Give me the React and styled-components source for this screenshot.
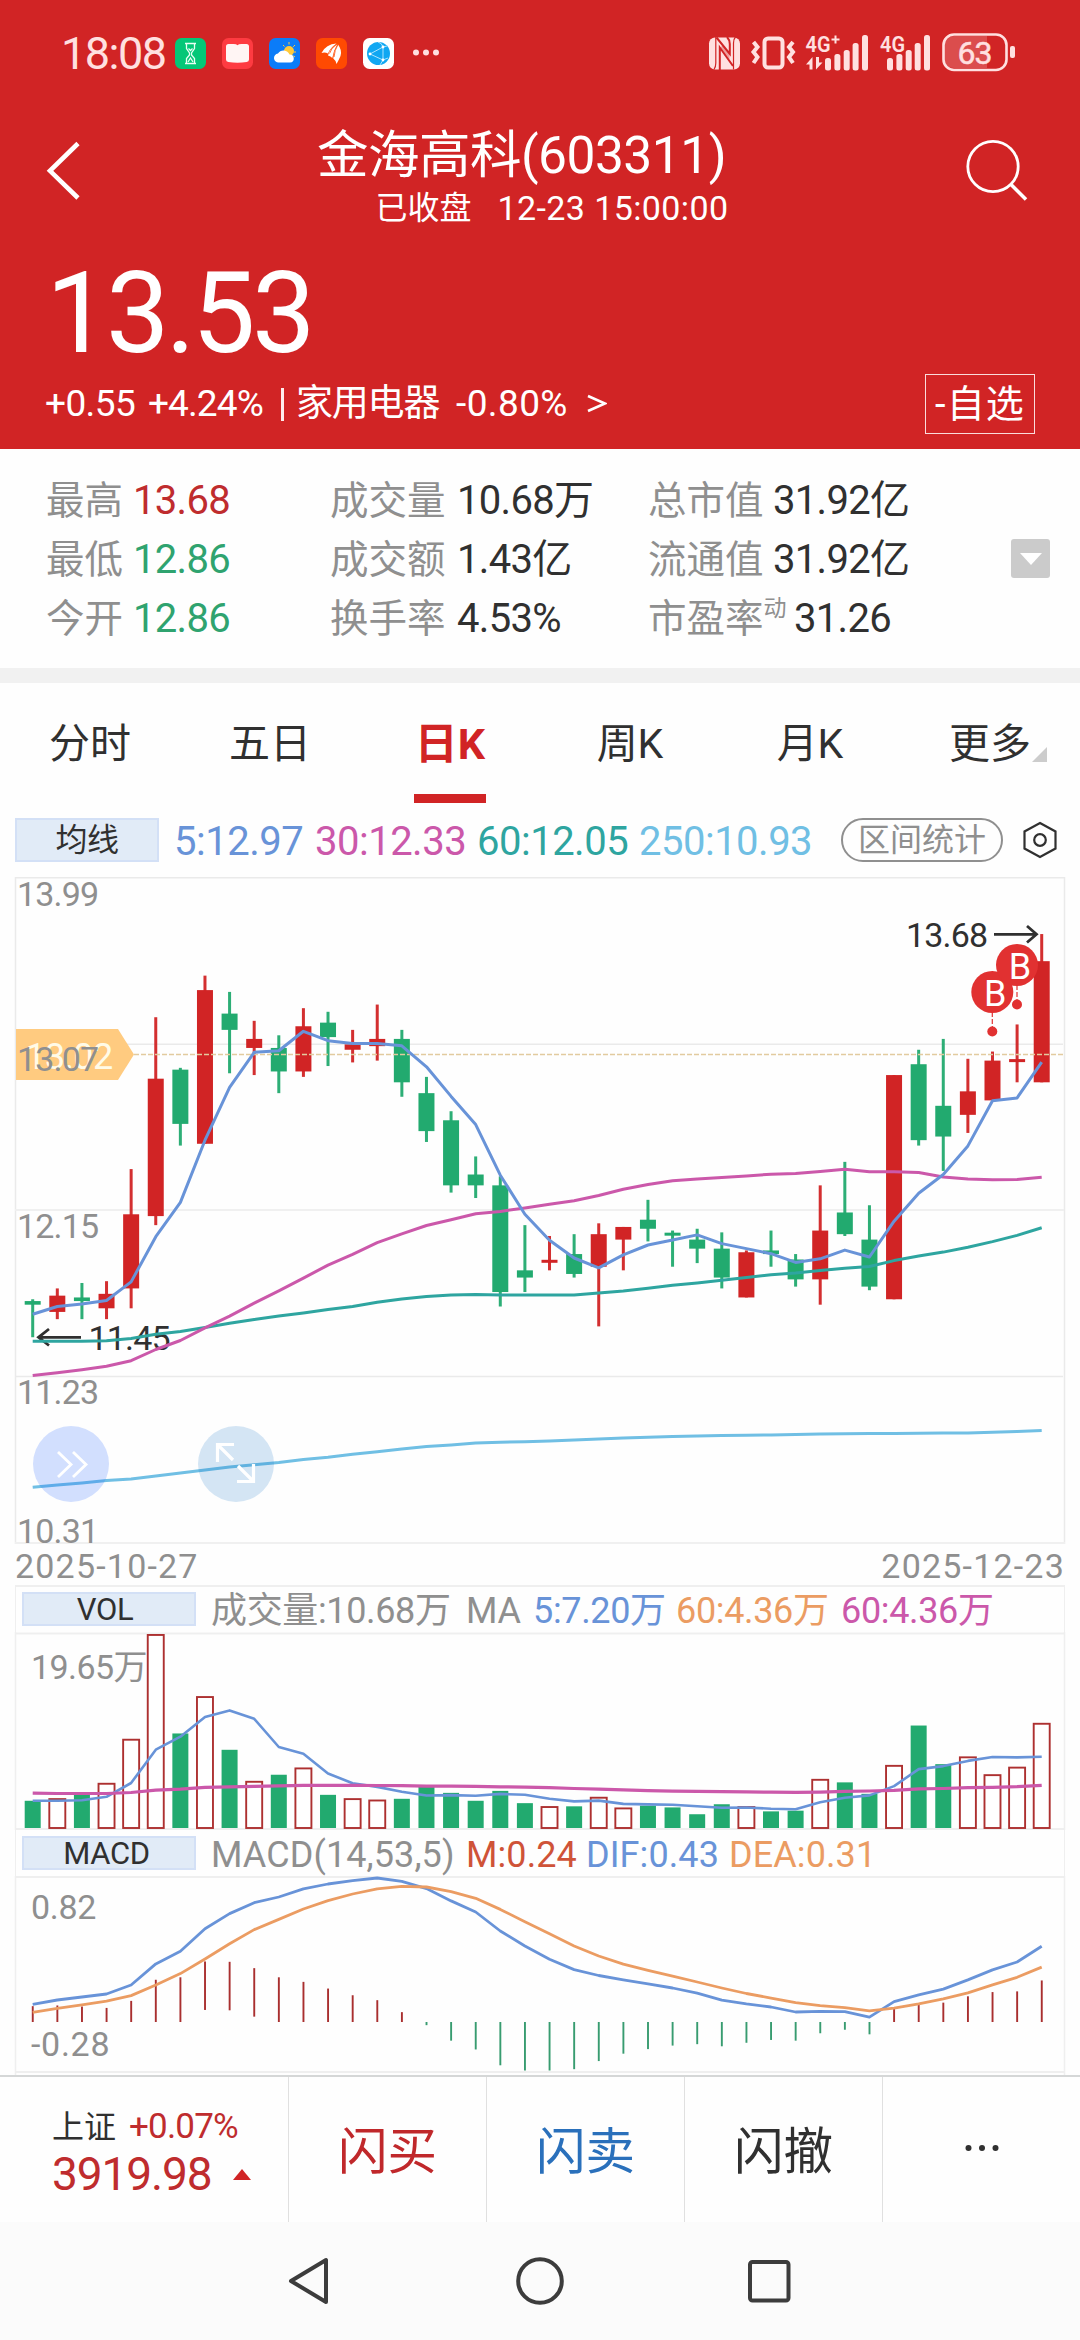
import React from "react";
import styled, { createGlobalStyle } from "styled-components";

const RED = "#d12425";
const GREEN = "#22aa6f";
const BLUE = "#6893d8";
const PURPLE = "#cb58aa";
const TEAL = "#2ea5a0";
const SKY = "#70bfe4";
const ORANGE = "#eb9c62";
const GREY = "#8f8f8f";
const INK = "#303030";

const FONT = 'Roboto, "Noto Sans CJK SC", sans-serif';

const GlobalStyle = createGlobalStyle`
  * {
    box-sizing: border-box;
  }
  body {
    margin: 0;
    background: #fefefe;
    font-family: ${FONT};
    color: ${INK};
  }
  svg {
    display: block;
    flex: none;
  }
`;

/* ---------- data ---------- */

// [direction, body top, body bottom, high, low, volume]
const DAYS = [
  ["g", 11.65, 11.63, 11.66, 11.45, 2.8],
  ["r", 11.68, 11.59, 11.72, 11.55, 3.07],
  ["g", 11.67, 11.65, 11.75, 11.55, 3.4],
  ["r", 11.69, 11.61, 11.76, 11.55, 4.62],
  ["r", 12.13, 11.72, 12.38, 11.61, 9.07],
  ["r", 12.88, 12.12, 13.22, 12.07, 19.65],
  ["g", 12.93, 12.63, 12.94, 12.51, 9.6],
  ["r", 13.37, 12.52, 13.45, 12.52, 13.38],
  ["g", 13.24, 13.15, 13.36, 12.91, 7.95],
  ["r", 13.1, 13.05, 13.2, 12.9, 4.82],
  ["g", 13.05, 12.92, 13.12, 12.8, 5.43],
  ["r", 13.17, 12.92, 13.27, 12.89, 6.17],
  ["g", 13.19, 13.11, 13.25, 12.95, 3.4],
  ["r", 13.07, 13.04, 13.15, 12.97, 3.07],
  ["r", 13.1, 13.06, 13.29, 12.98, 2.93],
  ["g", 13.1, 12.86, 13.15, 12.78, 3.0],
  ["g", 12.8, 12.59, 12.89, 12.53, 4.25],
  ["g", 12.65, 12.29, 12.7, 12.25, 3.6],
  ["g", 12.35, 12.29, 12.45, 12.22, 2.8],
  ["g", 12.29, 11.7, 12.34, 11.62, 3.8],
  ["g", 11.82, 11.78, 12.07, 11.7, 2.56],
  ["r", 11.87, 11.87, 12.01, 11.82, 2.27],
  ["g", 11.91, 11.8, 12.02, 11.78, 2.24],
  ["r", 12.02, 11.84, 12.08, 11.51, 3.21],
  ["r", 12.06, 11.99, 12.06, 11.82, 2.13],
  ["g", 12.1, 12.05, 12.21, 11.98, 2.31],
  ["g", 12.02, 12.01, 12.04, 11.84, 2.13],
  ["g", 11.99, 11.94, 12.05, 11.86, 1.44],
  ["g", 11.94, 11.78, 12.03, 11.72, 2.45],
  ["r", 11.92, 11.67, 11.93, 11.67, 2.27],
  ["g", 11.93, 11.91, 12.04, 11.84, 1.73],
  ["g", 11.88, 11.77, 11.91, 11.73, 1.8],
  ["r", 12.04, 11.77, 12.29, 11.63, 5.02],
  ["g", 12.14, 12.02, 12.42, 12.01, 4.66],
  ["g", 11.99, 11.73, 12.18, 11.71, 3.5],
  ["r", 12.9, 11.66, 12.9, 11.66, 6.43],
  ["g", 12.96, 12.54, 13.04, 12.51, 10.4],
  ["g", 12.73, 12.56, 13.1, 12.37, 6.5],
  ["r", 12.81, 12.68, 12.99, 12.58, 7.29],
  ["r", 12.98, 12.76, 13.03, 12.76, 5.49],
  ["r", 12.98, 12.98, 13.18, 12.86, 6.25],
  ["r", 13.53, 12.86, 13.68, 12.86, 10.68],
];

const MA30 = [
  11.238, 11.253, 11.27, 11.289, 11.32, 11.382, 11.432, 11.502, 11.567, 11.638,
  11.706, 11.777, 11.849, 11.908, 11.973, 12.022, 12.068, 12.1, 12.133, 12.146,
  12.165, 12.186, 12.205, 12.234, 12.268, 12.295, 12.316, 12.325, 12.333,
  12.342, 12.352, 12.356, 12.367, 12.379, 12.365, 12.365, 12.361, 12.337,
  12.325, 12.321, 12.323, 12.335,
];

const MA60 = [
  11.428, 11.428, 11.428, 11.43, 11.443, 11.466, 11.481, 11.504, 11.527, 11.548,
  11.567, 11.584, 11.603, 11.62, 11.643, 11.662, 11.676, 11.683, 11.687, 11.683,
  11.683, 11.683, 11.683, 11.695, 11.706, 11.721, 11.737, 11.75, 11.765, 11.78,
  11.796, 11.805, 11.819, 11.832, 11.841, 11.874, 11.899, 11.921, 11.948,
  11.979, 12.013, 12.055,
];

const MA250 = [
  10.62, 10.633, 10.644, 10.657, 10.666, 10.683, 10.699, 10.716, 10.732, 10.745,
  10.757, 10.773, 10.786, 10.803, 10.817, 10.832, 10.845, 10.854, 10.865,
  10.869, 10.872, 10.876, 10.882, 10.887, 10.892, 10.897, 10.901, 10.904,
  10.906, 10.908, 10.91, 10.912, 10.914, 10.916, 10.917, 10.918, 10.919, 10.92,
  10.921, 10.924, 10.928, 10.934,
];

const VOL60 = [
  3.57, 3.54, 3.54, 3.54, 3.64, 3.88, 3.98, 4.15, 4.21, 4.25, 4.31, 4.35, 4.35,
  4.35, 4.34, 4.32, 4.28, 4.28, 4.25, 4.21, 4.18, 4.12, 4.04, 3.97, 3.9, 3.83,
  3.78, 3.75, 3.73, 3.7, 3.67, 3.65, 3.68, 3.75, 3.79, 3.86, 4.0, 4.04, 4.12,
  4.15, 4.22, 4.36,
];

const DIF = [
  0.1, 0.125, 0.142, 0.159, 0.21, 0.33, 0.402, 0.53, 0.616, 0.678, 0.71, 0.756,
  0.784, 0.803, 0.818, 0.799, 0.758, 0.688, 0.625, 0.517, 0.432, 0.357, 0.298,
  0.264, 0.239, 0.217, 0.193, 0.164, 0.124, 0.103, 0.085, 0.057, 0.061, 0.059,
  0.028, 0.116, 0.154, 0.187, 0.239, 0.296, 0.341, 0.43,
];

const DEA = [
  0.055, 0.078, 0.098, 0.119, 0.15, 0.21, 0.275, 0.358, 0.445, 0.525, 0.583,
  0.642, 0.689, 0.727, 0.756, 0.771, 0.767, 0.741, 0.703, 0.64, 0.57, 0.501,
  0.432, 0.375, 0.329, 0.294, 0.26, 0.227, 0.193, 0.162, 0.136, 0.11, 0.093,
  0.081, 0.063, 0.079, 0.103, 0.132, 0.166, 0.211, 0.254, 0.312,
];

const average5 = (values, head) =>
  values.map((_, i) =>
    i < 4 ? head[i] : values.slice(i - 4, i + 1).reduce((a, b) => a + b, 0) / 5
  );

const closes = DAYS.map(([dir, top, bottom]) => (dir === "r" ? top : bottom));
const MA5 = average5(closes, [11.577, 11.62, 11.634, 11.653]);
const VOL5 = average5(DAYS.map(d => d[5]), [2.8, 2.8, 2.86, 3.2]);

const xOf = i => 32.7 + i * 24.61;
const priceY = p => 1 + (13.99 - p) * 180.8;
const volY = v => 196.5 - v * 9.9;
const macdY = v => 146 - v * 176;

const toPoints = (values, scale) =>
  values.map((v, i) => `${xOf(i).toFixed(1)},${scale(v).toFixed(1)}`).join(" ");

/* ---------- header ---------- */

const Screen = styled.div`
  width: 1080px;
  height: 2340px;
  display: flex;
  flex-direction: column;
  overflow: hidden;
`;

const Header = styled.header`
  height: 449px;
  background: ${RED};
  color: #fff;
`;

const StatusBar = styled.div`
  height: 106px;
  padding: 0 64px 0 61px;
  display: flex;
  align-items: center;
  color: #ffe0e0;
`;

const Clock = styled.span`
  width: 114px;
  font-size: 45px;
  letter-spacing: -1.5px;
`;

const AppIcons = styled.div`
  flex: 1;
  display: flex;
  align-items: center;
  gap: 16px;
`;

const TitleBar = styled.div`
  height: 130px;
  padding: 0 52px 0 46px;
  display: flex;
  justify-content: space-between;
`;

const TitleText = styled.div`
  margin-right: 5px;
  display: flex;
  flex-direction: column;
  align-items: center;
`;

const Title = styled.h1`
  margin: 20px 0 0;
  font-size: 51.5px;
  font-weight: 400;
  line-height: 60px;
  letter-spacing: -0.5px;
`;

const SubTitle = styled.div`
  display: flex;
  gap: 26px;
  margin: 2px 0 0 61px;
  font-size: 34px;
  line-height: 40px;
  letter-spacing: 0.4px;
`;

const Market = styled.span`
  font-size: 32px;
  letter-spacing: 0;
`;

const Price = styled.div`
  height: 136px;
  padding: 12px 0 0 46px;
  font-size: 113px;
  line-height: 132px;
  letter-spacing: -3.6px;
`;

const ChangeRow = styled.div`
  height: 64px;
  padding: 0 45px 0 45px;
  display: flex;
  align-items: center;
  font-size: 37px;
  line-height: 60px;
`;

const ChangeItem = styled.span`
  width: ${props => props.$w}px;
  letter-spacing: ${props => props.$ls || 0}px;
  white-space: nowrap;
`;

const Divider = styled.span`
  width: 3px;
  height: 33px;
  margin-right: 12px;
  background: #ffecec;
`;

const WatchButton = styled.button`
  width: 110px;
  height: 60px;
  margin-left: auto;
  padding: 0;
  border: 1.5px solid #fbdcdc;
  background: none;
  color: #fff;
  font: 38px ${FONT};
  line-height: 56px;
  letter-spacing: 1.2px;
  white-space: nowrap;
`;

/* ---------- quote stats ---------- */

const Stats = styled.section`
  height: 219px;
  padding: 22px 30px 0 46px;
  display: flex;
`;

const StatColumn = styled.div`
  width: ${props => props.$w}px;
`;

const Stat = styled.div`
  height: 59px;
  font-size: 40px;
  line-height: 60px;
  letter-spacing: -0.7px;
  white-space: nowrap;
  color: ${props => props.$color || INK};
`;

const StatLabel = styled.span`
  display: inline-block;
  width: ${props => props.$w}px;
  font-size: 38.5px;
  line-height: 58px;
  letter-spacing: 0;
  color: ${GREY};
`;

const Sup = styled.sup`
  font-size: 23px;
  line-height: 0;
  vertical-align: 16px;
`;

const ExpandButton = styled.button`
  width: 39px;
  height: 39px;
  margin: 68px 0 0 auto;
  padding: 0;
  border: 0;
  border-radius: 3px;
  background: #cbcbcb;
  display: grid;
  place-items: center;
`;

const Gap = styled.div`
  height: 15px;
  background: #f1f1f1;
`;

/* ---------- tabs and indicator rows ---------- */

const Tabs = styled.nav`
  height: 120px;
  display: grid;
  grid-template-columns: repeat(6, 1fr);
`;

const Tab = styled.div`
  display: flex;
  flex-direction: column;
  align-items: center;
  font-size: ${props => (props.$active ? 43 : 41)}px;
  line-height: 122px;
  color: ${props => (props.$active ? RED : INK)};
  font-weight: ${props => (props.$active ? 700 : 400)};
  &::after {
    content: "";
    width: 72px;
    height: 9px;
    margin-top: -11px;
    background: ${props => (props.$active ? RED : "none")};
  }
`;

const MoreLabel = styled.span`
  position: relative;
  svg {
    position: absolute;
    left: 83px;
    top: 64px;
  }
`;

const AverageRow = styled.div`
  height: 74px;
  padding: 15px 15px 15px 15px;
  display: flex;
  align-items: center;
  font-size: 40px;
  letter-spacing: -0.5px;
`;

const Tag = styled.span`
  width: ${props => props.$w}px;
  height: ${props => props.$h}px;
  padding: ${props => props.$pad || 0};
  border: 2px solid #d3e0f6;
  background: #e1ebf7;
  display: flex;
  align-items: center;
  justify-content: center;
  flex: none;
  font-size: ${props => props.$size}px;
  line-height: 30px;
  letter-spacing: -0.4px;
  color: ${INK};
`;

const Legend = styled.span`
  width: ${props => props.$w}px;
  color: ${props => props.$color};
  line-height: 40px;
  white-space: nowrap;
`;

const AverageList = styled.div`
  width: 682px;
  flex: none;
  padding: 4px 0 0 15px;
  display: flex;
`;

const Pill = styled.button`
  width: 162px;
  height: 44px;
  flex: none;
  padding: 0;
  margin-right: 18px;
  border: 2px solid ${GREY};
  border-radius: 22px;
  background: none;
  color: ${GREY};
  font: 32px ${FONT};
  line-height: 38px;
`;

/* ---------- charts ---------- */

const ChartBox = styled.div`
  position: relative;
  height: ${props => props.$h}px;
  svg text {
    font-family: ${FONT};
  }
`;

const FloatButton = styled.button`
  position: absolute;
  top: 549px;
  left: ${props => props.$x}px;
  width: 76px;
  height: 76px;
  padding: 0;
  border: 0;
  border-radius: 50%;
  background: ${props => props.$bg};
`;

const DateRow = styled.div`
  height: 41px;
  padding: 1px 15px 0 15px;
  display: flex;
  justify-content: space-between;
  font-size: 34px;
  line-height: 43px;
  letter-spacing: 1.2px;
  color: ${GREY};
`;

const IndicatorRow = styled.div`
  height: ${props => props.$h}px;
  margin: 0 15px;
  padding: 0 0 1px 6px;
  border: solid #efefef;
  border-width: ${props => (props.$top ? 2 : 0)}px 1.5px 0;
  display: flex;
  align-items: center;
  font-size: 36px;
  letter-spacing: ${props => props.$ls}px;
`;

const LegendList = styled.div`
  padding: 4px 0 0 15px;
  display: flex;
`;

/* ---------- bottom bars ---------- */

const TradeBar = styled.footer`
  height: 147px;
  border-top: 2px solid #d5d7d7;
  display: grid;
  grid-template-columns: 288px 198px 198px 198px 198px;
`;

const IndexCell = styled.div`
  padding: 27px 0 0 52px;
`;

const IndexName = styled.div`
  display: flex;
  gap: 13px;
  font-size: 32px;
  line-height: 46px;
  span {
    color: #bf2c2e;
    font-size: 35px;
    letter-spacing: -0.8px;
  }
`;

const IndexValue = styled.div`
  display: flex;
  align-items: center;
  gap: 21px;
  font-size: 46px;
  line-height: 48px;
  letter-spacing: -1.1px;
  color: #bf2c2e;
`;

const TradeButton = styled.button`
  padding: 0 0 5px;
  border: 0;
  border-left: 1px solid #e0e0e0;
  background: none;
  font: 49.5px ${FONT};
  color: ${props => props.$color};
  display: flex;
  align-items: center;
  justify-content: center;
`;

const NavBar = styled.div`
  height: 118px;
  background: #fbfbfb;
  display: flex;
  justify-content: center;
  padding-top: 33px;
  gap: 180px;
`;

/* ---------- icons ---------- */

const AppTile = ({ fill, children }) => (
  <svg width="31" height="31" viewBox="0 0 31 31">
    <rect width="31" height="31" rx="6.5" fill={fill} />
    {children}
  </svg>
);

const StatusApps = () => (
  <AppIcons>
    <AppTile fill="#04c777">
      <g fill="none" stroke="#e8fff4" strokeWidth="1.3">
        <path d="M10 5.5h11M10 25.5h11M11.5 6v4.5l3 4.5v2l-3 3.500v4.500M19.500 6v4.500l-3 4.500v2l3 3.500v4.500" />
        <path d="M13 24l2.500-4 2.500 4M13.500 10.500l2 2 2-2" />
      </g>
    </AppTile>
    <AppTile fill="#fe3b41">
      <path
        d="M4 8.500q0-2.500 2.500-2.500h5q3 0 4 1.200 1-1.200 4-1.200h5q2.500 0 2.500 2.500v13q0 2.300-2.300 2.500-9.200 1.600-18.400 0-2.300-.2-2.300-2.500z"
        fill="#fff5f4"
      />
    </AppTile>
    <AppTile fill="#0b7cf8">
      <circle cx="20" cy="13" r="5" fill="#ffc93a" />
      <path
        d="M20 4v2.500M26 7l-1.800 1.800M27 14h-2.500M14 7l1.500 1.500M26 19l-1.500-1.200"
        stroke="#ffc93a"
        strokeWidth="1"
      />
      <path
        d="M10 24.500a4.500 4.500 0 01-1-9 6.500 6.500 0 0111.500 1 4 4 0 01.5 8z"
        fill="#fff"
      />
    </AppTile>
    <AppTile fill="#ff4a02">
      <path d="M5.500 15Q10 6 20.500 5.500 14 10 12 15.500q-3-1.500-6.500-.5z" fill="#fff" />
      <path d="M12 17.500Q14 10 21.300 6q-4 7-5 14-1.500-2-4.300-2.500z" fill="#fff" />
      <path d="M17.300 20.500Q18 12 22 6.500q4.500 6 2.500 11.500-1.500 3.500-4 8-.5-3.500-3.200-5.500z" fill="#fff" />
      <path d="M13.500 15.500Q15 10 21 6M18 19Q18.500 12 22 6.500" fill="none" stroke="#ff4a02" strokeWidth="0.800" />
    </AppTile>
    <AppTile fill="#fff">
      <circle cx="15.500" cy="15.500" r="11.500" fill="#10a7f2" />
      <path
        d="M7 16L20 9M7 16l13 6M20 9v13M20 9q-1-4-5-5M20 9l4-1M20 22l-3 5M20 22l5-2"
        fill="none"
        stroke="#bdeaff"
        strokeWidth="0.900"
      />
      <circle cx="7" cy="16" r="1.400" fill="#fff" />
      <circle cx="20" cy="9" r="1.400" fill="#fff" />
      <circle cx="20" cy="22" r="1.400" fill="#fff" />
    </AppTile>
    <svg width="30" height="8" fill="currentColor">
      <circle cx="6" cy="3.500" r="3" />
      <circle cx="16" cy="3.500" r="3" />
      <circle cx="26" cy="3.500" r="3" />
    </svg>
  </AppIcons>
);

const SignalIcons = () => (
  <svg width="308" height="40" viewBox="708 33 308 40" fill="#ffe0e0">
    <rect x="709" y="37.500" width="31" height="32" rx="6" />
    <path
      d="M715.800 37V63Q715.800 67 714 69.500M733.500 69.500V43Q733.500 39 735.500 37"
      fill="none"
      stroke={RED}
      strokeWidth="1.200"
    />
    <path
      d="M719.800 70V47.500L733 66M716.500 37.500L729.800 54V44Q729.800 40 727 37"
      fill="none"
      stroke={RED}
      strokeWidth="2"
    />
    <path d="M722.500 45l7 9v5.500l-9-11.500z" fill={RED} opacity="0.350" />
    <rect x="764.500" y="38.500" width="18" height="29" rx="3.500" fill="none" stroke="#ffe0e0" strokeWidth="4" />
    <path
      d="M753.500 42l4 5-4 5 4 5-4 6M793 42l-4 5 4 5-4 5 4 6"
      fill="none"
      stroke="#ffe0e0"
      strokeWidth="4"
    />
    <text x="805.500" y="52" fontSize="22" fontWeight="600" textLength="25" lengthAdjust="spacingAndGlyphs" fontFamily="Roboto, sans-serif">
      4G
    </text>
    <path d="M831.500 39.500h8M835.500 35.500v8" stroke="#ffe0e0" strokeWidth="2" />
    <path d="M812.500 57v12.500h-3V64.500h-3.500zM816 69.500V57h3v5.500h3.500z" />
    {[[825, 58], [834.4, 54], [843.7, 50], [852.600, 43], [862, 35]].map(([x, y]) => (
      <rect key={x} x={x} y={y} width="6" height={69 - y + 1.500} rx="2.500" />
    ))}
    <text x="880" y="52" fontSize="22" fontWeight="600" textLength="25" lengthAdjust="spacingAndGlyphs" fontFamily="Roboto, sans-serif">
      4G
    </text>
    {[[887, 58], [896.400, 54], [905.700, 50], [914.700, 43], [924, 35]].map(([x, y]) => (
      <rect key={x} x={x} y={y} width="6" height={69 - y + 1.500} rx="2.500" />
    ))}
    <path d="M954 36h33v32h-33q-10 0-10-10V46q0-10 10-10z" opacity="0.220" />
    <rect x="943.500" y="34.500" width="63" height="35.500" rx="10.500" fill="none" stroke="#ffe0e0" strokeWidth="2.600" />
    <rect x="1010" y="46" width="5" height="12" rx="2" />
    <text x="974.500" y="63.500" fontSize="32" textAnchor="middle" letterSpacing="-1" stroke="#ffe0e0" strokeWidth="0.500" fontFamily="Roboto, sans-serif">
      63
    </text>
  </svg>
);

/* ---------- chart drawings ---------- */

const Line = ({ values, scale, color, width = 3 }) => (
  <polyline
    points={toPoints(values, scale)}
    fill="none"
    stroke={color}
    strokeWidth={width}
    strokeLinejoin="round"
  />
);

const PriceChart = () => (
  <svg width="1080" height="667">
    <g stroke="#eaeaea" strokeWidth="1.500">
      <path d="M15 .8H1065M15 167.200H1063M15 499.500H1063M15.500 0V667M1064.500 0V667" fill="none" />
      <path d="M15 333H1064M15 666H1065" strokeWidth="2" stroke="#f0f0f0" />
    </g>
    {DAYS.map(([dir, top, bottom, high, low], i) => {
      const color = dir === "r" ? RED : GREEN;
      const y = priceY(top);
      const h = Math.max(priceY(bottom) - y, 3);
      return (
        <g key={i} fill={color}>
          <rect x={xOf(i) - 1.500} y={priceY(high)} width="3" height={priceY(low) - priceY(high)} opacity="0.950" />
          <rect x={xOf(i) - 8} y={h === 3 ? y - 1.500 : y} width="16" height={h} />
        </g>
      );
    })}
    <path d="M134 177.500H1063" stroke="#e2cb9f" strokeWidth="1.300" strokeDasharray="5 2" />
    <path d="M16 152H118L134 177.500L118 203H16z" fill="#ffcb80" />
    <text x="25.500" y="192" fontSize="36" fill="#fffbe8" letterSpacing="-0.700">13.02</text>
    <g fill={INK} stroke="none" fontSize="34" letterSpacing="-0.800">
      <text x="88.500" y="473">11.45</text>
      <text x="906" y="70">13.68</text>
    </g>
    <g fill="none" stroke={INK} strokeWidth="2.800">
      <path d="M81 460.300H39M49 452L38.500 460.300L49 468.500" />
      <path d="M994 57.300H1035M1027 49L1036.500 57.300L1027 65.500" />
    </g>
    <g fill="none">
      <Line values={MA250} scale={priceY} color={SKY} />
      <Line values={MA60} scale={priceY} color={TEAL} />
      <Line values={MA30} scale={priceY} color={PURPLE} />
      <Line values={MA5} scale={priceY} color={BLUE} />
    </g>
    {[[992.300, 115], [1017, 88]].map(([x, y]) => (
      <g key={x} fill="#e13131">
        <path d={`M${x} ${y + 20}v20`} stroke="#e13131" strokeWidth="1.200" strokeDasharray="5 2" />
        <circle cx={x} cy={y} r="21" />
        <circle cx={x} cy={y + 39.500} r="5" />
        <text x={x + 3} y={y + 13.500} fontSize="36" fill="#fff" textAnchor="middle">B</text>
      </g>
    ))}
    <g fill={GREY} fontSize="34" letterSpacing="-0.800">
      <text x="17" y="28.500">13.99</text>
      <text x="17" y="194">13.07</text>
      <text x="17" y="360.500">12.15</text>
      <text x="17" y="527">11.23</text>
      <text x="17" y="666">10.31</text>
    </g>
  </svg>
);

const VolumeChart = () => (
  <svg width="1080" height="198">
    <path d="M15.500 0V198M1064.500 0V198" stroke="#efefef" strokeWidth="1.500" />
    <path d="M15 1.500H1065M15 197H1065" stroke="#efefef" strokeWidth="2" />
    {DAYS.map(([dir, , , , , vol], i) =>
      dir === "r" ? (
        <rect key={i} x={xOf(i) - 8} y={volY(vol) + 1} width="16" height={195 - volY(vol)} fill="#fff" stroke="#ad3030" strokeWidth="1.900" />
      ) : (
        <rect key={i} x={xOf(i) - 8} y={volY(vol)} width="16" height={196 - volY(vol)} fill={GREEN} />
      )
    )}
    <Line values={VOL5} scale={volY} color={BLUE} width={2.600} />
    <Line values={VOL60} scale={volY} color={PURPLE} width={3.200} />
    <text x="31" y="47" fontSize="34" letterSpacing="-0.600" fill={GREY}>19.65万</text>
  </svg>
);

const MacdChart = () => (
  <svg width="1080" height="199">
    <path d="M15.500 0V199M1064.500 0V199" stroke="#efefef" strokeWidth="1.500" />
    <path d="M15 1H1065M15 196H1065" stroke="#efefef" strokeWidth="2" />
    {DIF.map((v, i) => {
      const m = 2 * (v - DEA[i]);
      const y = macdY(m);
      return (
        <rect
          key={i}
          x={xOf(i) - 0.900}
          y={Math.min(y, 146)}
          width="1.900"
          height={Math.min(Math.abs(y - 146), 48.500)}
          fill={m > 0 ? "#a92f2f" : "#389c70"}
        />
      );
    })}
    <Line values={DIF} scale={macdY} color={BLUE} width={2.800} />
    <Line values={DEA} scale={macdY} color={ORANGE} width={2.800} />
    <g fill={GREY} fontSize="34" letterSpacing="-0.300">
      <text x="31" y="43">0.82</text>
      <text x="31" y="180" letterSpacing="0.700">-0.28</text>
    </g>
  </svg>
);

const App = () => {
  return (
    <Screen>
      <GlobalStyle />
      <Header>
        <StatusBar>
          <Clock>18:08</Clock>
          <StatusApps />
          <SignalIcons />
        </StatusBar>
        <TitleBar>
          <svg width="36" height="130" fill="none" stroke="#fff" strokeWidth="4.600">
            <path d="M32 37.500L4 64.800L32 92" />
          </svg>
          <TitleText>
            <Title>金海高科(603311)</Title>
            <SubTitle>
              <Market>已收盘</Market>
              <span>12-23 15:00:00</span>
            </SubTitle>
          </TitleText>
          <svg width="62" height="130" fill="none" stroke="#fff" strokeWidth="2.800">
            <circle cx="27" cy="60.500" r="25.200" />
            <path d="M45 78.500L60 93.500" strokeWidth="3.500" />
          </svg>
        </TitleBar>
        <Price>13.53</Price>
        <ChangeRow>
          <ChangeItem $w={103} $ls={-0.6}>+0.55</ChangeItem>
          <ChangeItem $w={133} $ls={-0.9}>+4.24%</ChangeItem>
          <Divider />
          <ChangeItem $w={160} $ls={-1.2}>家用电器</ChangeItem>
          <ChangeItem $w={131} $ls={0.4}>-0.80%</ChangeItem>
          <svg width="20" height="20" fill="none" stroke="#fff" strokeWidth="2.600">
            <path d="M1 2L18 9.500L1 17" />
          </svg>
          <WatchButton>-自选</WatchButton>
        </ChangeRow>
      </Header>

      <Stats>
        <StatColumn $w={284}>
          <Stat $color="#bf2c2e"><StatLabel $w={87}>最高</StatLabel>13.68</Stat>
          <Stat $color="#2fa36f"><StatLabel $w={87}>最低</StatLabel>12.86</Stat>
          <Stat $color="#2fa36f"><StatLabel $w={87}>今开</StatLabel>12.86</Stat>
        </StatColumn>
        <StatColumn $w={318}>
          <Stat><StatLabel $w={127}>成交量</StatLabel>10.68万</Stat>
          <Stat><StatLabel $w={127}>成交额</StatLabel>1.43亿</Stat>
          <Stat><StatLabel $w={127}>换手率</StatLabel>4.53%</Stat>
        </StatColumn>
        <StatColumn $w={300}>
          <Stat><StatLabel $w={125}>总市值</StatLabel>31.92亿</Stat>
          <Stat><StatLabel $w={125}>流通值</StatLabel>31.92亿</Stat>
          <Stat><StatLabel $w={146}>市盈率<Sup>动</Sup></StatLabel>31.26</Stat>
        </StatColumn>
        <ExpandButton>
          <svg width="22" height="12"><path d="M0 0H22L11 12z" fill="#fff" /></svg>
        </ExpandButton>
      </Stats>
      <Gap />

      <Tabs>
        <Tab>分时</Tab>
        <Tab>五日</Tab>
        <Tab $active>日K</Tab>
        <Tab>周K</Tab>
        <Tab>月K</Tab>
        <Tab>
          <MoreLabel>
            更多
            <svg width="15" height="15"><path d="M15 0V15H0z" fill="#ccc" /></svg>
          </MoreLabel>
        </Tab>
      </Tabs>

      <AverageRow>
        <Tag $w={144} $h={44} $size={32}>均线</Tag>
        <AverageList>
          <Legend $w={141} $color={BLUE}>5:12.97</Legend>
          <Legend $w={162} $color={PURPLE}>30:12.33</Legend>
          <Legend $w={162} $color={TEAL}>60:12.05</Legend>
          <Legend $w={180} $color={SKY}>250:10.93</Legend>
        </AverageList>
        <Pill>区间统计</Pill>
        <svg width="38" height="40" fill="none" stroke={INK} strokeWidth="2.200">
          <path d="M19 3L34.500 11.500V28.500L19 37L3.500 28.500V11.500z" />
          <circle cx="19" cy="20" r="5.800" />
        </svg>
      </AverageRow>

      <ChartBox $h={667}>
        <PriceChart />
        <FloatButton $x={33} $bg="rgba(20, 90, 255, 0.19)">
          <svg width="76" height="76" fill="none" stroke="#fff" strokeWidth="2.800">
            <path d="M25 26L38 38.500L25 51M40 26L53 38.500L40 51" />
          </svg>
        </FloatButton>
        <FloatButton $x={198} $bg="rgba(30, 120, 200, 0.19)">
          <svg width="76" height="76" fill="none" stroke="#fff" strokeWidth="3.200">
            <path d="M19.500 36V18.500H36M20 19L35 34M39 55.500H55.500V38M55 55L40 40" />
          </svg>
        </FloatButton>
      </ChartBox>

      <DateRow>
        <span>2025-10-27</span>
        <span>2025-12-23</span>
      </DateRow>

      <IndicatorRow $h={47} $ls={-0.35} $top>
        <Tag $w={174} $h={34} $size={31} $pad="2px 8px 0 0">VOL</Tag>
        <LegendList>
          <Legend $w={255} $color={GREY}>成交量:10.68万</Legend>
          <Legend $w={67} $color={GREY}>MA</Legend>
          <Legend $w={143} $color={BLUE}>5:7.20万</Legend>
          <Legend $w={165} $color={ORANGE}>60:4.36万</Legend>
          <Legend $w={165} $color={PURPLE}>60:4.36万</Legend>
        </LegendList>
      </IndicatorRow>
      <ChartBox $h={198}>
        <VolumeChart />
      </ChartBox>
      <IndicatorRow $h={46} $ls={0.1}>
        <Tag $w={174} $h={34} $size={31} $pad="2px 5px 0 0">MACD</Tag>
        <LegendList>
          <Legend $w={255} $color={GREY}>MACD(14,53,5)</Legend>
          <Legend $w={120} $color="#cf5338">M:0.24</Legend>
          <Legend $w={143} $color={BLUE}>DIF:0.43</Legend>
          <Legend $w={165} $color={ORANGE}>DEA:0.31</Legend>
        </LegendList>
      </IndicatorRow>
      <ChartBox $h={199}>
        <MacdChart />
      </ChartBox>

      <TradeBar>
        <IndexCell>
          <IndexName>上证<span>+0.07%</span></IndexName>
          <IndexValue>
            3919.98
            <svg width="18" height="11"><path d="M9 0L18 11H0z" fill={RED} /></svg>
          </IndexValue>
        </IndexCell>
        <TradeButton $color="#c0282b">闪买</TradeButton>
        <TradeButton $color="#2a70bb">闪卖</TradeButton>
        <TradeButton $color={INK}>闪撤</TradeButton>
        <TradeButton $color={INK}>
          <svg width="34" height="10" fill={INK}>
            <circle cx="3.500" cy="6" r="3" />
            <circle cx="17" cy="6" r="3" />
            <circle cx="30.500" cy="6" r="3" />
          </svg>
        </TradeButton>
      </TradeBar>

      <NavBar>
        <svg width="50" height="52" fill="none" stroke="#3c3c3c" strokeWidth="4" strokeLinejoin="round">
          <path d="M41 5V47L6 26z" />
        </svg>
        <svg width="50" height="52" fill="none" stroke="#3c3c3c" strokeWidth="4">
          <circle cx="25" cy="26" r="21.800" />
        </svg>
        <svg width="50" height="52" fill="none" stroke="#3c3c3c" strokeWidth="4">
          <rect x="5" y="7" width="38.500" height="38.500" rx="2.500" />
        </svg>
      </NavBar>
    </Screen>
  );
};

export default App;
